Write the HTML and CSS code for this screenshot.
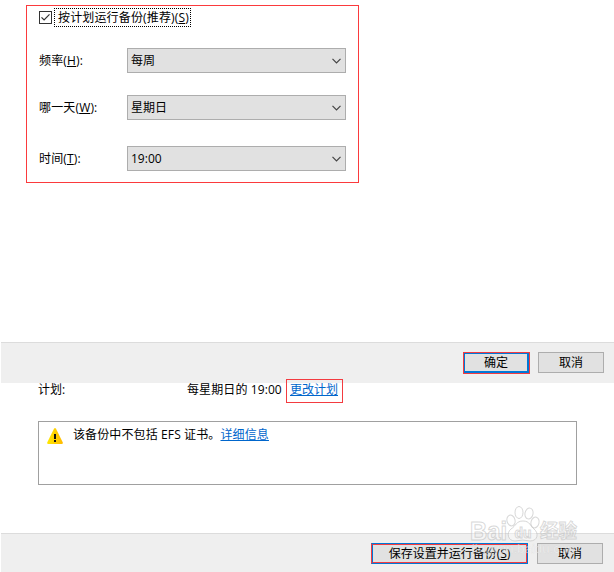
FILE: index.html
```html
<!DOCTYPE html>
<html lang="zh-CN">
<head>
<meta charset="utf-8">
<title>备份计划</title>
<link rel="stylesheet" href="styles.css">
</head>
<body>
<main class="page">
  <section class="schedule">
    <div class="check-row">
      <svg class="checkbox" width="13" height="13" viewBox="0 0 13 13"><rect x=".5" y=".5" width="12" height="12" fill="#fff" stroke="#333"/><path d="M2.5 6.3 5.1 9 10.5 3.4" fill="none" stroke="#333" stroke-width="1.2"/></svg>
      <span class="focus">按计划运行备份(推荐)(<u>S</u>)</span>
    </div>
    <div class="field"><span class="label">频率(<u>H</u>):</span><div class="select">每周<svg class="chevron" width="9" height="6" viewBox="0 0 9 6"><path d="M.5.8 4.5 4.8 8.5.8"/></svg></div></div>
    <div class="field day"><span class="label">哪一天(<u>W</u>):</span><div class="select">星期日<svg class="chevron" width="9" height="6" viewBox="0 0 9 6"><path d="M.5.8 4.5 4.8 8.5.8"/></svg></div></div>
    <div class="field time"><span class="label">时间(<u>T</u>):</span><div class="select">19:00<svg class="chevron" width="9" height="6" viewBox="0 0 9 6"><path d="M.5.8 4.5 4.8 8.5.8"/></svg></div></div>
  </section>
  <footer class="bar upper">
    <div class="button ok"><span>确定</span></div>
    <div class="button">取消</div>
  </footer>
  <section class="plan">
    <span class="plan-label">计划:</span>
    <span class="plan-value">每星期日的 19:00</span>
    <span class="change"><a>更改计划</a></span>
  </section>
  <section class="notice">
    <svg class="warning" width="16" height="16" viewBox="0 0 16 16"><defs><linearGradient id="gold" x1="0" x2="1"><stop offset="0" stop-color="#ffe800"/><stop offset="1" stop-color="#ffba00"/></linearGradient></defs><path d="M7 .8Q8-.8 9 .8L15.7 14.3Q16.3 16 14.7 16H1.3Q-.3 16 .3 14.3Z" fill="url(#gold)"/><path d="M7 6H9V11H7ZM7 12H9V14H7Z" fill="#111"/></svg>
    <span class="notice-text">该备份中不包括 EFS 证书。<a>详细信息</a></span>
  </section>
  <footer class="bar lower">
    <div class="button save"><span>保存设置并运行备份(<u>S</u>)</span></div>
    <div class="button">取消</div>
  </footer>
  <svg class="watermark" width="116" height="60" viewBox="0 0 116 60">
    <g class="mark">
      <text class="brand" x="0" y="40" textLength="37" lengthAdjust="spacingAndGlyphs">Bai</text>
      <ellipse cx="41" cy="20.5" rx="4" ry="5.5" transform="rotate(-15 41 20.5)"/>
      <ellipse cx="49" cy="12.5" rx="4" ry="6"/>
      <ellipse cx="59" cy="13.5" rx="4" ry="5.5" transform="rotate(12 59 13.5)"/>
      <ellipse cx="65" cy="22.5" rx="4" ry="5.5" transform="rotate(15 65 22.5)"/>
      <path d="M53 21C46 21 46 26 41 29C36 33 38 41 45 41Q53 39 60 41C68 41 69 33 64 29C60 26 60 21 53 21Z"/>
      <text class="du" x="44.5" y="38" textLength="17" lengthAdjust="spacingAndGlyphs">du</text>
      <text class="topic" x="70" y="38" textLength="37" lengthAdjust="spacingAndGlyphs">经验</text>
    </g>
    <text class="site" x="2" y="53" textLength="106" lengthAdjust="spacingAndGlyphs">jingyan.baidu.com</text>
  </svg>
</main>
</body>
</html>
```
FILE: styles.css
```css
* { box-sizing: border-box; }
body {
  margin: 0;
  background: #fff;
  color: #000;
  font: 12px/18px "Open Sans", "Noto Sans CJK SC", sans-serif;
}
u { text-underline-offset: 1px; text-decoration-thickness: 1px; }
a { color: #0066cc; text-decoration: underline; text-underline-offset: 1px; text-decoration-thickness: 1px; }
.page {
  position: relative;
  display: flex;
  flex-direction: column;
  width: 614px;
  height: 572px;
  padding-top: 5px;
  overflow: hidden;
  white-space: nowrap;
}
.schedule {
  width: 333px;
  height: 178px;
  margin-left: 26px;
  padding: 2px 12px 0;
  border: 1px solid #fb3a3d;
}
.check-row { display: flex; align-items: center; gap: 2px; height: 19px; margin-bottom: 21px; }
.checkbox { flex: none; }
.focus { width: 137px; height: 19px; padding-left: 3px; border: 1px dotted #000; line-height: 18px; letter-spacing: .15px; }
.field { display: flex; height: 25px; align-items: center; }
.day { margin-top: 22px; }
.time { margin-top: 26px; }
.label { width: 88px; letter-spacing: .15px; }
.select {
  display: flex;
  align-items: center;
  justify-content: space-between;
  width: 219px;
  height: 25px;
  padding: 0 4px 0 3px;
  border: 1px solid #adadad;
  background: #e1e1e1;
}
.chevron { fill: none; stroke: #444; stroke-width: 1.2; }
.bar {
  display: flex;
  justify-content: flex-end;
  gap: 8px;
  margin-left: 1px;
  border-top: 1px solid #dcdcdc;
  background: #efefef;
}
.upper { height: 41px; margin-top: 159px; padding: 9px 10px 0 0; }
.button {
  display: flex;
  align-items: center;
  justify-content: center;
  width: 66px;
  height: 21px;
  border: 1px solid #adadad;
  background: #e1e1e1;
}
.ok { width: 67px; height: 22px; border-color: #f33b40; }
.ok span { display: flex; align-items: center; justify-content: center; width: 100%; height: 100%; border: solid #0078d7; border-width: 1px 2px 2px 1px; }
.plan { display: flex; align-items: flex-start; height: 38px; padding-left: 38px; }
.plan-label, .plan-value { margin-top: -2px; }
.plan-label { width: 149px; }
.plan-value { width: 99px; letter-spacing: .1px; }
.change { width: 57px; height: 24px; margin-top: -4px; padding: 1px 0 0 3px; border: 1px solid #f33b40; }
.notice { display: flex; align-items: flex-start; gap: 10px; width: 539px; height: 64px; margin-left: 38px; padding: 4px 8px; border: 1px solid #a0a0a0; }
.warning { flex: none; margin-top: 2px; }
.notice-text { letter-spacing: .12px; }
.lower { height: 39px; margin-top: 48px; padding: 9px 11px 0 0; gap: 9px; }
.save { width: 157px; border-color: #0078d7; border-left-color: #f33b40; }
.save span { display: flex; align-items: center; justify-content: center; width: 100%; height: 100%; padding-top: 1px; border: 1px solid #f33b40; border-left-color: #0078d7; }
.watermark { position: absolute; left: 470px; top: 500px; pointer-events: none; }
.mark { fill: #fff; fill-opacity: .4; stroke: #bdbdbd; stroke-opacity: .6; stroke-width: 1; }
.brand { font: bold 25px "Liberation Sans", sans-serif; }
.du { font: bold 15px "Liberation Sans", sans-serif; }
.topic { font: bold 19px "Noto Sans CJK SC", sans-serif; }
.site { fill: #fff; fill-opacity: .5; stroke: #aaa; stroke-opacity: .2; stroke-width: .5; font: 12px "Liberation Sans", sans-serif; }
```
